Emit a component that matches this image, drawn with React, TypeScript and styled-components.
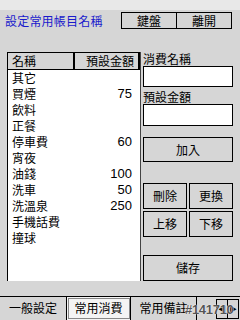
import styled, { createGlobalStyle } from 'styled-components';

const GlobalStyle = createGlobalStyle`
  html, body {
    margin: 0;
    padding: 0;
    background: #d6d6d6;
  }
  body {
    font-family: "Noto Sans CJK TC", "Liberation Sans", sans-serif;
    font-size: 12px;
    color: #000;
  }
`;

const Screen = styled.div`
  position: relative;
  width: 240px;
  height: 320px;
  overflow: hidden;
  display: flex;
  flex-direction: column;
  background: #d6d6d6;
`;

const TopBand = styled.div`
  height: 10px;
  background: #e8e8e8;
`;

const TitleRow = styled.div`
  display: flex;
  align-items: center;
  height: 17px;
  margin-top: 2px;
  padding-left: 5px;
  padding-right: 8px;
`;

const Title = styled.div`
  flex: 1;
  color: #1a1acc;
  font-size: 12px;
  line-height: 17px;
  letter-spacing: 0.2px;
`;

const TopButtons = styled.div`
  display: flex;
  border: 1px solid #000;
  height: 15px;
`;

const TopButton = styled.div`
  width: 54px;
  font-size: 12px;
  line-height: 15px;
  text-align: center;
  & + & {
    border-left: 1px solid #000;
  }
`;

const Main = styled.div`
  display: flex;
  margin-top: 23px;
  padding-left: 7px;
  height: 229px;
`;

const ListBox = styled.div`
  width: 132px;
  border-left: 1px solid #000;
  border-right: 1px solid #444;
  background: #fff;
  display: flex;
  flex-direction: column;
`;

const HeaderRow = styled.div`
  display: flex;
  height: 16px;
  width: 130px;
  border-top: 1px solid #000;
  border-bottom: 1px solid #000;
  border-right: 2px solid #000;
  background: #d6d6d6;
`;

const HeaderCell = styled.div<{ $w: number; $right?: boolean }>`
  width: ${({ $w }) => $w}px;
  font-size: 12px;
  line-height: 16px;
  padding: 0 ${({ $right }) => ($right ? 4 : 0)}px 0 ${({ $right }) => ($right ? 0 : 4)}px;
  box-sizing: border-box;
  text-align: ${({ $right }) => ($right ? 'right' : 'left')};
  & + & {
    border-left: 2px solid #000;
  }
`;

const Row = styled.div`
  display: flex;
  height: 16px;
  padding: 0 8px 0 4px;
  font-size: 12px;
  line-height: 16px;
`;

const RowName = styled.span`
  flex: 1;
`;

const RowAmount = styled.span`
  font-family: "Liberation Sans", sans-serif;
  font-size: 13px;
`;

const Side = styled.div`
  display: flex;
  flex-direction: column;
  margin-left: 2px;
  width: 90px;
`;

const Label = styled.div`
  font-size: 12px;
  line-height: 14px;
  height: 14px;
`;

const Input = styled.div<{ $gap: number }>`
  height: 20px;
  border: 1px solid #000;
  background: #fff;
  margin-bottom: ${({ $gap }) => $gap}px;
`;

const Button = styled.div<{ $gap?: number; $h?: number }>`
  height: ${({ $h }) => $h ?? 26}px;
  border: 1px solid #000;
  box-sizing: border-box;
  margin-top: ${({ $gap }) => $gap ?? 0}px;
  font-size: 12px;
  line-height: ${({ $h }) => ($h ?? 26) - 2}px;
  text-align: center;
`;

const ButtonPair = styled.div<{ $gap: number }>`
  display: flex;
  gap: 2px;
  margin-top: ${({ $gap }) => $gap}px;
  & > div {
    flex: 1;
  }
`;

const TabBar = styled.div`
  position: relative;
  display: flex;
  margin-top: 15px;
  height: 24px;
  border-top: 1px solid #000;
`;

const Tab = styled.div<{ $w: number; $active?: boolean }>`
  width: ${({ $w }) => $w}px;
  box-sizing: border-box;
  font-size: 12px;
  line-height: 22px;
  text-align: center;
  border-right: 1px solid #000;
  background: ${({ $active }) => ($active ? '#f4f4f4' : '#d6d6d6')};
  outline: ${({ $active }) => ($active ? '1px solid #888' : 'none')};
  outline-offset: -2px;
`;

const Arrows = styled.div`
  display: flex;
  flex: 1;
  padding-top: 2px;
  padding-left: 19px;
`;

const Arrow = styled.div`
  width: 10px;
  height: 18px;
  border: 1px solid #000;
  font-size: 8px;
  line-height: 18px;
  text-align: center;
  & + & {
    border-left: none;
  }
`;

const Watermark = styled.div`
  position: absolute;
  left: 185px;
  top: 6px;
  font-family: "Liberation Sans", sans-serif;
  font-weight: bold;
  font-size: 13px;
  line-height: 14px;
  color: #555;
  letter-spacing: -0.3px;
  text-shadow: 0 0 1px #fff, 0 0 1px #fff;
`;

const items: [string, string][] = [
  ['其它', ''],
  ['買煙', '75'],
  ['飲料', ''],
  ['正餐', ''],
  ['停車費', '60'],
  ['宵夜', ''],
  ['油錢', '100'],
  ['洗車', '50'],
  ['洗溫泉', '250'],
  ['手機話費', ''],
  ['撞球', ''],
];

export default function App() {
  return (
    <Screen>
      <GlobalStyle />
      <TopBand />
      <TitleRow>
        <Title>設定常用帳目名稱</Title>
        <TopButtons>
          <TopButton>鍵盤</TopButton>
          <TopButton>離開</TopButton>
        </TopButtons>
      </TitleRow>
      <Main>
        <ListBox>
          <HeaderRow>
            <HeaderCell $w={65}>名稱</HeaderCell>
            <HeaderCell $w={65} $right>
              預設金額
            </HeaderCell>
          </HeaderRow>
          {items.map(([name, amount]) => (
            <Row key={name}>
              <RowName>{name}</RowName>
              <RowAmount>{amount}</RowAmount>
            </Row>
          ))}
        </ListBox>
        <Side>
          <Label>消費名稱</Label>
          <Input $gap={3} />
          <Label>預設金額</Label>
          <Input $gap={0} />
          <Button $gap={11} $h={25}>
            加入
          </Button>
          <ButtonPair $gap={21}>
            <Button>刪除</Button>
            <Button>更換</Button>
          </ButtonPair>
          <ButtonPair $gap={2}>
            <Button>上移</Button>
            <Button>下移</Button>
          </ButtonPair>
          <Button $gap={18}>儲存</Button>
        </Side>
      </Main>
      <TabBar>
        <Tab $w={67}>一般設定</Tab>
        <Tab $w={64} $active>
          常用消費
        </Tab>
        <Tab $w={66}>常用備註</Tab>
        <Arrows>
          <Arrow>◀</Arrow>
          <Arrow>▶</Arrow>
        </Arrows>
        <Watermark>#141710</Watermark>
      </TabBar>
    </Screen>
  );
}
